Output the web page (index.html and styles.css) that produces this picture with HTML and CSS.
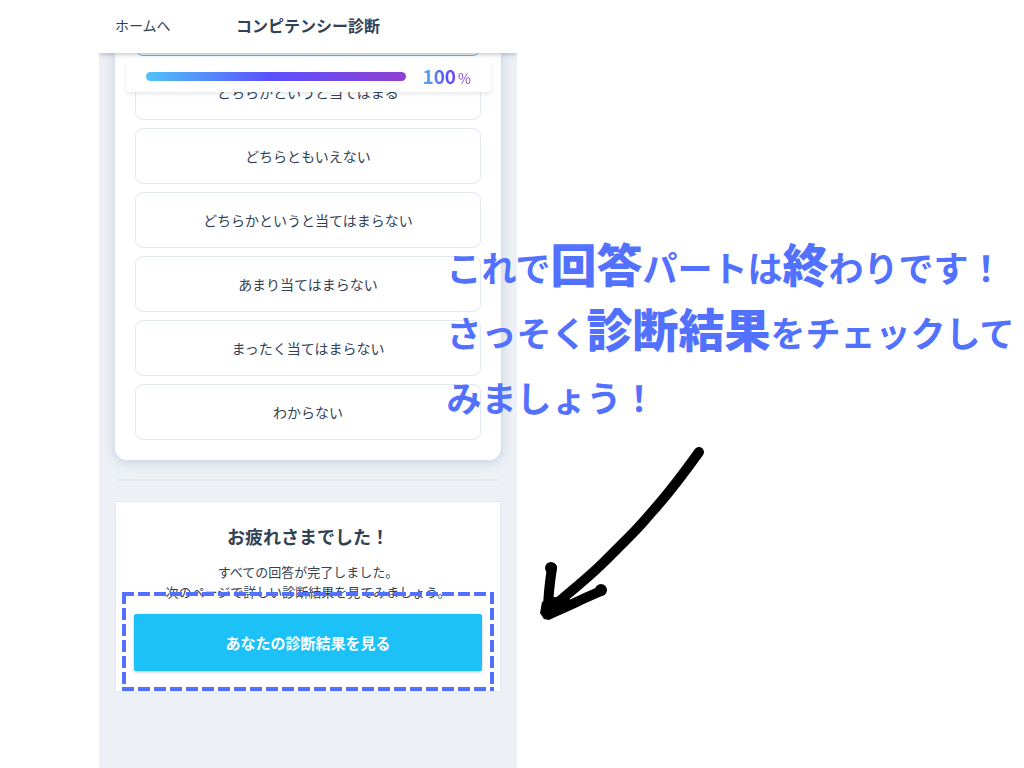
FILE: index.html
```html
<!DOCTYPE html>
<html lang="ja">

<head>
    <meta charset="UTF-8">
    <meta name="viewport" content="width=device-width, initial-scale=1.0">
    <title>コンピテンシー診断</title>
    <link rel="stylesheet" href="styles.css">
</head>

<body>
    <div class="slide">
        <div class="screen">
            <header class="header">
                <a href="#" class="home">ホームへ</a>
                <h1>コンピテンシー診断</h1>
            </header>

            <div class="progress">
                <div class="bar"></div>
                <div class="percent">100<small>%</small></div>
            </div>

            <main class="content">
                <div class="card">
                    <button class="option selected" aria-label="当てはまる"></button>
                    <button class="option">どちらかというと当てはまる</button>
                    <button class="option">どちらともいえない</button>
                    <button class="option">どちらかというと当てはまらない</button>
                    <button class="option">あまり当てはまらない</button>
                    <button class="option">まったく当てはまらない</button>
                    <button class="option">わからない</button>
                </div>

                <hr class="divider">

                <section class="finish">
                    <h2>お疲れさまでした！</h2>
                    <p>すべての回答が完了しました。<br>次のページで詳しい診断結果を見てみましょう。</p>
                    <button class="result">あなたの診断結果を見る</button>
                    <svg class="marker" aria-hidden="true">
                        <line x1="0" y1="2" x2="100%" y2="2" />
                        <line x1="0" y1="97" x2="100%" y2="97" />
                        <line x1="2" y1="0" x2="2" y2="99" />
                        <line class="right" x1="100%" y1="0" x2="100%" y2="99" />
                    </svg>
                </section>
            </main>
        </div>

        <div class="note">
            <p>これで<b>回答</b>パートは<b>終</b>わりです！<br>さっそく<b>診断結果</b>をチェックして<br>みましょう！</p>
            <svg class="arrow" width="170" height="180" viewBox="0 0 170 180" aria-hidden="true">
                <path class="shaft" d="M163 11C148 32 134 51 115 72C109 79 102 87 95 94C87 102 78 111 69 120C57 132 45 142 33 152L14 168" />
                <path class="barb" d="M16 127C14 140 12 155 12 170L14 172C27 168 38 162 49 157L65 150" />
                <circle cx="15" cy="127" r="6" />
                <circle cx="65" cy="149" r="6" />
                <path d="M6 161L18 156L34 158L30 171L13 179L8 178L4 172Z" />
            </svg>
        </div>
    </div>
</body>

</html>
```

FILE: styles.css
```css
* {
    box-sizing: border-box;
    margin: 0;
    padding: 0;
}

body {
    font-family: "Noto Sans CJK JP", sans-serif;
    color: #334155;
    background: white;
}

button {
    font-family: inherit;
    cursor: pointer;
}

.slide {
    position: relative;
    display: grid;
    grid-template-columns: 99fr 418fr 507fr;
    min-height: 100vh;
    overflow: hidden;
}

.screen {
    position: relative;
    grid-column: 2;
    background: #edf1f6;
}

.header {
    position: relative;
    z-index: 3;
    display: grid;
    grid-template-columns: 1fr auto 1fr;
    align-items: center;
    height: 53px;
    padding: 0 16px 4px;
    background: white;
    box-shadow: 0 2px 4px rgba(51, 65, 85, 0.25);
    clip-path: inset(0 0 -8px 0);
}

.home {
    font-size: 14px;
    color: #334155;
    text-decoration: none;
}

.header h1 {
    font-size: 16px;
}

.progress {
    position: absolute;
    z-index: 2;
    top: 61px;
    left: 27px;
    right: 26px;
    display: flex;
    align-items: center;
    gap: 16px;
    height: 31px;
    padding: 0 20px;
    background: white;
    border-radius: 4px;
    box-shadow: 0 2px 4px rgba(51, 65, 85, 0.12);
}

.bar {
    flex: 1;
    height: 9px;
    border-radius: 5px;
    background: linear-gradient(to right, #4fc3f5, #5b50ff 48%, #9040d0);
}

.percent {
    font-size: 19px;
    line-height: 28px;
    font-weight: bold;
    color: transparent;
    background: linear-gradient(to right, #4fb4f5, #5b50ff 50%, #9040d0);
    -webkit-background-clip: text;
    background-clip: text;
}

.percent small {
    margin-left: 2px;
    font-size: 14px;
    font-weight: normal;
}

/* scrolled up so that the first answer sits under the header */
.content {
    margin-top: -53px;
    padding: 0 16px 76px;
}

.card {
    display: flex;
    flex-direction: column;
    gap: 8px;
    padding: 0 20px 20px;
    background: white;
    border-radius: 0 0 12px 12px;
    box-shadow: 0 2px 12px rgba(71, 105, 145, 0.25);
}

.option {
    height: 56px;
    font-size: 14px;
    color: #334155;
    background: white;
    border: 1px solid #e2e8f0;
    border-radius: 8px;
}

.selected {
    background: #f0f8fc;
    border-color: #4cc4ee;
}

.divider {
    margin: 19px 0 20px;
    border: none;
    border-top: 2px solid #e5e9ef;
}

.finish {
    position: relative;
    padding: 20px 18px;
    background: white;
    border: 1px solid #e2e8f0;
    text-align: center;
}

.finish h2 {
    margin-bottom: 12px;
    font-size: 18px;
    line-height: 28px;
}

.finish p {
    margin-bottom: 12px;
    font-size: 13px;
    line-height: 20px;
}

.result {
    display: block;
    width: 100%;
    height: 57px;
    font-size: 15px;
    font-weight: bold;
    color: white;
    background: #1cc2f7;
    border: none;
    border-radius: 2px;
    box-shadow: 0 1px 3px rgba(51, 65, 85, 0.35);
}

.marker {
    position: absolute;
    left: 6px;
    bottom: 0;
    width: calc(100% - 12px);
    height: 99px;
}

.marker line {
    stroke: #5271ff;
    stroke-width: 4px;
    stroke-dasharray: 12 4;
}

.marker .right {
    transform: translateX(-2px);
}

.note {
    position: absolute;
    z-index: 4;
    top: 234px;
    left: 43.6%;
    right: 0;
}

.note p {
    font-size: 35px;
    font-weight: bold;
    line-height: 65px;
    white-space: nowrap;
    color: #5271ff;
}

.note b {
    font-size: 46px;
    line-height: 1;
}

.arrow {
    display: block;
    margin: 12px 0 0 90px;
}

.shaft,
.barb {
    fill: none;
    stroke: black;
    stroke-width: 10px;
    stroke-linecap: round;
    stroke-linejoin: round;
}
```
